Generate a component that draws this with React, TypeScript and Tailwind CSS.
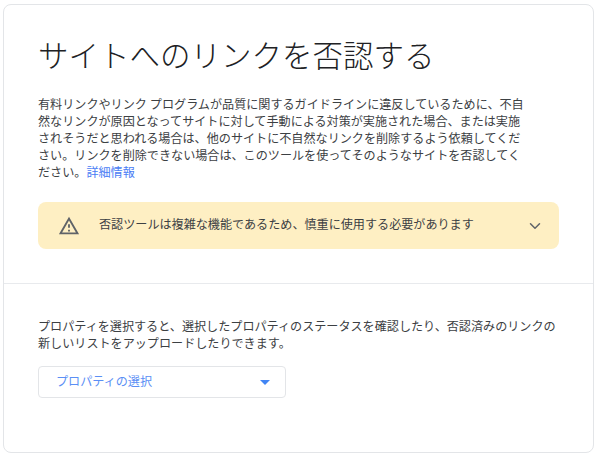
import { ChevronDown } from 'lucide-react';

const bodyFont = "font-['Roboto','Noto_Sans_CJK_JP',sans-serif]";

export default function App() {
  return (
    <div className={`h-[460px] w-[602px] bg-white pl-[3px] pr-[8px] pt-[4px] ${bodyFont}`}>
      <div className="h-[449px] rounded-[8px] border border-[#e3e5e8] bg-white">
        <section className="h-[279px] border-b border-[#e8eaed] pl-[34px] pr-[34px] pt-[30px]">
          <h1 className="text-[30.5px] leading-[44px] font-light whitespace-nowrap text-[#202124]">
            サイトへのリンクを否認する
          </h1>
          <p className="mt-[18px] text-[12.1px] leading-[17px] whitespace-nowrap text-[#3c4043]">
            有料リンクやリンク プログラムが品質に関するガイドラインに違反しているために、不自
            <br />
            然なリンクが原因となってサイトに対して手動による対策が実施された場合、または実施
            <br />
            されそうだと思われる場合は、他のサイトに不自然なリンクを削除するよう依頼してくだ
            <br />
            さい。リンクを削除できない場合は、このツールを使ってそのようなサイトを否認してく
            <br />
            ださい。<a className="text-[#4a7df5]">詳細情報</a>
          </p>
          <div className="mt-[20px] flex h-[47px] w-[521px] items-center rounded-[8px] bg-[#feefc3] pl-[20px] pr-[15px]">
            <svg viewBox="0 0 24 24" className="h-[22px] w-[22px] text-[#5f6368]" fill="currentColor">
              <path d="M12 5.99 19.53 19H4.47L12 5.99M12 2 1 21h22L12 2zm1 14h-2v2h2v-2zm0-6h-2v4h2v-4z" />
            </svg>
            <span className="ml-[19px] flex-1 text-[12.1px] text-[#3c4043]">
              否認ツールは複雑な機能であるため、慎重に使用する必要があります
            </span>
            <ChevronDown size={18} strokeWidth={2} className="text-[#5f6368]" />
          </div>
        </section>
        <section className="pl-[34px] pr-[34px] pt-[35px]">
          <p className="text-[12.1px] leading-[17px] whitespace-nowrap text-[#3c4043]">
            プロパティを選択すると、選択したプロパティのステータスを確認したり、否認済みのリンクの
            <br />
            新しいリストをアップロードしたりできます。
          </p>
          <div className="mt-[13px] flex h-[32px] w-[248px] items-center justify-between rounded-[4px] border border-[#e3e5e8] pl-[17px] pr-[15px]">
            <span className="text-[12.1px] text-[#5b8ff5]">プロパティの選択</span>
            <span className="h-0 w-0 border-x-[5px] border-t-[5px] border-x-transparent border-t-[#4285f4]" />
          </div>
        </section>
      </div>
    </div>
  );
}
